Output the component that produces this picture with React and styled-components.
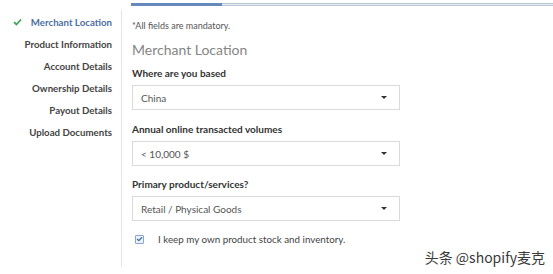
import React from "react";
import styled, { createGlobalStyle } from "styled-components";

const Global = createGlobalStyle`
  html, body { margin: 0; padding: 0; background: #fff; }
  body { font-family: Lato, "Open Sans", Arial, sans-serif; color: #333; }
  * { box-sizing: border-box; }
`;

const Page = styled.div`
  display: flex;
  width: 553px;
  height: 274px;
  position: relative;
  overflow: hidden;
`;

const Sidebar = styled.nav`
  width: 121px;
  flex: none;
  display: flex;
  flex-direction: column;
  align-items: flex-end;
  padding: 11px 9px 0 0;
`;

const NavItem = styled.div`
  display: flex;
  align-items: center;
  height: 22px;
  font-size: 9.7px;
  font-weight: 700;
  color: ${(p) => (p.$active ? "#4d6fa3" : "#444")};
  white-space: nowrap;
`;

const Check = styled.svg`
  width: 9px;
  height: 8px;
  margin-right: 9px;
`;

const Main = styled.div`
  flex: 1;
  display: flex;
  flex-direction: column;
`;

const Progress = styled.div`
  margin: 3px 0 0 10px;
  height: 3px;
  display: flex;
  background: #e6ecf2;
  border-top: 1px solid #b9c6d3;
  border-bottom: 1px solid #b9c6d3;
`;

const ProgressFill = styled.div`
  height: 3px;
  margin-top: -1px;
  background: #6589bd;
`;

const Panel = styled.section`
  margin-top: 4px;
  height: 257px;
  border-left: 1px solid #e6e6e6;
  padding: 10px 0 0 10px;
  display: flex;
  flex-direction: column;
`;

const Note = styled.div`
  font-size: 9px;
  line-height: 11px;
  color: #555;
`;

const Heading = styled.h2`
  margin: 10px 0 0;
  font-size: 14px;
  line-height: 17px;
  font-weight: 400;
  color: #858585;
`;

const Group = styled.div`
  display: flex;
  flex-direction: column;
  margin-top: ${(p) => p.$top}px;
`;

const Label = styled.label`
  font-size: 10px;
  line-height: 12px;
  font-weight: 700;
  color: #333;
  margin-bottom: 6px;
`;

const Select = styled.div`
  width: 268px;
  height: 25px;
  border: 1px solid #dadada;
  display: flex;
  align-items: center;
  justify-content: space-between;
  padding: 0 12px 0 8px;
  font-size: 10px;
  color: #555;
`;

const Caret = styled.span`
  width: 0;
  height: 0;
  border-left: 3px solid transparent;
  border-right: 3px solid transparent;
  border-top: 3px solid #333;
`;

const CheckRow = styled.div`
  display: flex;
  align-items: center;
  margin-top: 12px;
  height: 12px;
  font-size: 9.8px;
  color: #444;
`;

const Box = styled.span`
  width: 9px;
  height: 9px;
  margin: 0 14px 0 3px;
  border: 1px solid #8aa6cc;
  border-radius: 1px;
  background: #eef3f9;
  display: flex;
  align-items: center;
  justify-content: center;
`;

const Watermark = styled.div`
  position: absolute;
  right: 8px;
  bottom: 9px;
  font-family: "Noto Sans CJK SC", "Liberation Sans", sans-serif;
  font-size: 14px;
  line-height: 16px;
  color: #3a3a3a;
  text-shadow: 0 0 1px #fff;
`;

const nav = [
  "Merchant Location",
  "Product Information",
  "Account Details",
  "Ownership Details",
  "Payout Details",
  "Upload Documents",
];

const fields = [
  { label: "Where are you based", value: "China", top: 9 },
  { label: "Annual online transacted volumes", value: "< 10,000 $", top: 13 },
  { label: "Primary product/services?", value: "Retail / Physical Goods", top: 12 },
];

export default function App() {
  return (
    <>
      <Global />
      <Page>
        <Sidebar>
          {nav.map((n, i) => (
            <NavItem key={n} $active={i === 0}>
              {i === 0 && (
                <Check viewBox="0 0 9 8">
                  <path d="M1 4.2 L3.4 6.5 L8 1.5" fill="none" stroke="#3aa655" strokeWidth="1.8" />
                </Check>
              )}
              {n}
            </NavItem>
          ))}
        </Sidebar>
        <Main>
          <Progress>
            <ProgressFill style={{ width: "91px" }} />
          </Progress>
          <Panel>
            <Note>*All fields are mandatory.</Note>
            <Heading>Merchant Location</Heading>
            {fields.map((f) => (
              <Group key={f.label} $top={f.top}>
                <Label>{f.label}</Label>
                <Select>
                  <span>{f.value}</span>
                  <Caret />
                </Select>
              </Group>
            ))}
            <CheckRow>
              <Box>
                <svg width="7" height="6" viewBox="0 0 7 6">
                  <path d="M1 3 L2.8 4.6 L6 1.2" fill="none" stroke="#3d6fb0" strokeWidth="1.3" />
                </svg>
              </Box>
              I keep my own product stock and inventory.
            </CheckRow>
          </Panel>
        </Main>
        <Watermark>头条 @shopify麦克</Watermark>
      </Page>
    </>
  );
}
